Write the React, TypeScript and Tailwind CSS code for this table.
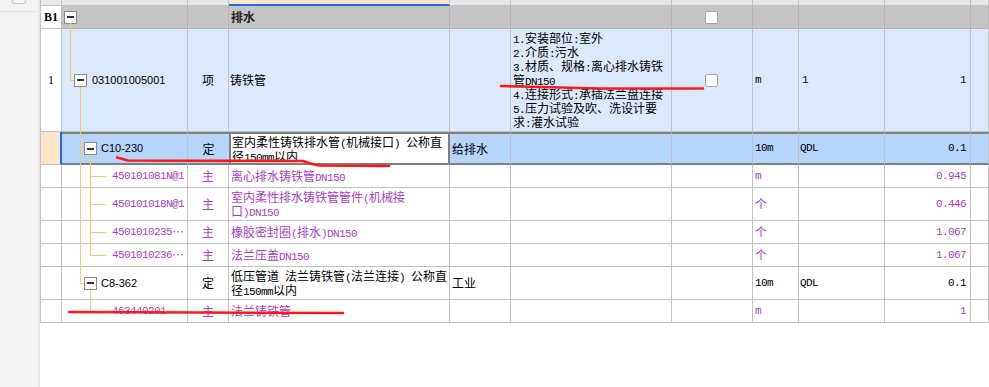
// Quota grid: 排水 section with 定额 / 主材 tree rows
import React from 'react';

const W = ['w-[21px]', 'w-[126px]', 'w-[41px]', 'w-[221px]', 'w-[61px]', 'w-[161px]', 'w-[81px]', 'w-[46px]', 'w-[86px]', 'w-[86px]', 'flex-1'];
const GRID = 'border-r border-b border-[#c2c2c2]';
const SEL = 'border-r border-y-2 border-r-[#c2c2c2] border-y-[#7f7f7f]';
const PURPLE = 'text-[#a842c2]';

// ASCII runs get the narrow half-width look, CJK stays 12px
function Sim({ text }: { text: string }) {
  const parts = text.match(/[ -~]+|[^ -~]+/g) ?? [];
  return (
    <>
      {parts.map((p, i) =>
        /^[ -~]/.test(p) ? (
          <span key={i} className="font-['Liberation_Mono',monospace] text-[11px] tracking-[-0.6px]">
            {p}
          </span>
        ) : (
          <span key={i}>{p}</span>
        )
      )}
    </>
  );
}

function Cell({ i, b = GRID, className = '', children }: { i: number; b?: string; className?: string; children?: React.ReactNode }) {
  return <div className={`${W[i]} shrink-0 flex items-center overflow-hidden ${b} ${className}`}>{children}</div>;
}

function Box() {
  return (
    <span className="w-[13px] h-[13px] shrink-0 border border-[#8c8c8c] bg-white flex items-center justify-center">
      <span className="w-[7px] h-[2px] bg-[#333]" />
    </span>
  );
}

function Check() {
  return <span className="w-[13px] h-[13px] border border-[#a6a6a6] rounded-[2px] bg-white" />;
}

function Lines({ lines }: { lines: string[] }) {
  return (
    <div className="flex flex-col">
      {lines.map((l) => (
        <div key={l} className="h-[14px] leading-[14px] whitespace-nowrap">
          <Sim text={l} />
        </div>
      ))}
    </div>
  );
}

const SUBS = [
  { code: '450101081N@1', name: ['离心排水铸铁管DN150'], unit: 'm', qty: '0.945', h: 'h-[23px]' },
  { code: '450101018N@1', name: ['室内柔性排水铸铁管管件(机械接', '口)DN150'], unit: '个', qty: '0.446', h: 'h-[33px]' },
  { code: '4501010235…', name: ['橡胶密封圈(排水)DN150'], unit: '个', qty: '1.067', h: 'h-[23px]' },
  { code: '4501010236…', name: ['法兰压盖DN150'], unit: '个', qty: '1.067', h: 'h-[23px]' },
];

const DESC = ['1.安装部位:室外', '2.介质:污水', '3.材质、规格:离心排水铸铁', '管DN150', '4.连接形式:承插法兰盘连接', '5.压力试验及吹、洗设计要', '求:灌水试验'];

function SubRow({ code, name, unit, qty, h }: { code: string; name: string[]; unit: string; qty: string; h: string }) {
  return (
    <div className={`flex ${h} bg-white border-l border-[#c2c2c2] ${PURPLE}`}>
      <Cell i={0} />
      <Cell i={1} className="pl-[50px]">
        <Sim text={code} />
      </Cell>
      <Cell i={2} className="justify-center">主</Cell>
      <Cell i={3} className="pl-[2px]">
        <Lines lines={name} />
      </Cell>
      <Cell i={4} />
      <Cell i={5} />
      <Cell i={6} />
      <Cell i={7} className="pl-[2px]">
        <Sim text={unit} />
      </Cell>
      <Cell i={8} />
      <Cell i={9} className="justify-end pr-[4px]">
        <Sim text={qty} />
      </Cell>
      <Cell i={10} />
    </div>
  );
}

export default function App() {
  return (
    <div className="relative w-[989px] h-[387px] flex bg-white overflow-hidden font-['Noto_Sans_CJK_SC',sans-serif] text-[12px] text-black">
      {/* left dock */}
      <div className="w-[40px] shrink-0 bg-[#f3f3f3] border-r-2 border-[#e8e8e8] flex flex-col">
        <div className="ml-[12px] w-[14px] h-[4px] border border-t-0 border-[#c6c6c6] rounded-b-[3px] bg-[#f8f8f8]" />
        <div className="mt-[7px] mr-[2px] h-px bg-[#e0e0e0]" />
      </div>

      <div className="flex-1 flex flex-col">
        {/* column header strip */}
        <div className="flex h-[6px] bg-[#e8e8e8] border-l border-[#c2c2c2]">
          {W.map((w, i) =>
            i === 3 ? (
              <div key={i} className={`${w} shrink-0 bg-[#fde6c6] border-b-2 border-[#1a6df5] border-r border-r-[#c2c2c2]`} />
            ) : (
              <div key={i} className={`${w} shrink-0 ${GRID}`} />
            )
          )}
        </div>

        {/* B1 */}
        <div className="flex h-[23px] bg-[#c4c4c4] border-l border-[#c2c2c2]">
          <Cell i={0} className="bg-white justify-center font-['Liberation_Serif',serif] font-bold">B1</Cell>
          <Cell i={1} b="border-r border-b border-[#b6b6b6]" className="pl-[2px]">
            <Box />
          </Cell>
          <Cell i={2} b="border-r border-b border-[#b6b6b6]" />
          <Cell i={3} b="border-r border-b border-[#b6b6b6]" className="pl-[2px] font-bold text-[#222]">排水</Cell>
          <Cell i={4} b="border-r border-b border-[#b6b6b6]" />
          <Cell i={5} b="border-r border-b border-[#b6b6b6]" />
          <Cell i={6} b="border-r border-b border-[#b6b6b6]" className="pl-[33px]">
            <Check />
          </Cell>
          <Cell i={7} b="border-r border-b border-[#b6b6b6]" />
          <Cell i={8} b="border-r border-b border-[#b6b6b6]" />
          <Cell i={9} b="border-r border-b border-[#b6b6b6]" />
          <Cell i={10} b="border-r border-b border-[#b6b6b6]" />
        </div>

        {/* 清单 row 1 */}
        <div className="flex h-[103px] bg-[#dce9fc] border-l border-[#c2c2c2]">
          <Cell i={0} className="bg-white justify-center font-['Liberation_Serif',serif]">1</Cell>
          <Cell i={1} className="pl-[12px] gap-[5px]">
            <Box />
            <span className="font-['Liberation_Sans',sans-serif] text-[11px]">031001005001</span>
          </Cell>
          <Cell i={2} className="justify-center">项</Cell>
          <Cell i={3} className="pl-[1px]">铸铁管</Cell>
          <Cell i={4} />
          <Cell i={5} className="pl-[2px]">
            <Lines lines={DESC} />
          </Cell>
          <Cell i={6} className="pl-[33px]">
            <Check />
          </Cell>
          <Cell i={7} className="pl-[2px]">
            <Sim text="m" />
          </Cell>
          <Cell i={8} className="pl-[3px]">
            <Sim text="1" />
          </Cell>
          <Cell i={9} className="justify-end pr-[4px]">
            <Sim text="1" />
          </Cell>
          <Cell i={10} />
        </div>

        {/* selected 定额 row */}
        <div className="flex h-[33px] bg-[#b5d5fc] border-l border-[#c2c2c2]">
          <Cell i={0} b="border-r-2 border-b border-r-[#1a6df5] border-b-[#c2c2c2]" className="bg-[#fde6c8]" />
          <Cell i={1} b={SEL} className="pl-[22px] gap-[4px]">
            <Box />
            <span className="font-['Liberation_Sans',sans-serif] text-[11px]">C10-230</span>
          </Cell>
          <Cell i={2} b="border-y-2 border-y-[#7f7f7f]" className="justify-center">定</Cell>
          <Cell i={3} b="border-2 border-[#7f7f7f]" className="bg-white pl-[1px]">
            <Lines lines={['室内柔性铸铁排水管(机械接口) 公称直', '径150mm以内']} />
          </Cell>
          <Cell i={4} b={SEL} className="pl-[2px]">给排水</Cell>
          <Cell i={5} b={SEL} />
          <Cell i={6} b={SEL} />
          <Cell i={7} b={SEL} className="pl-[2px]">
            <Sim text="10m" />
          </Cell>
          <Cell i={8} b={SEL} className="pl-[1px]">
            <Sim text="QDL" />
          </Cell>
          <Cell i={9} b={SEL} className="justify-end pr-[4px]">
            <Sim text="0.1" />
          </Cell>
          <Cell i={10} b={SEL} />
        </div>

        {SUBS.map((s) => (
          <SubRow key={s.code} {...s} />
        ))}

        {/* C8-362 */}
        <div className="flex h-[33px] bg-white border-l border-[#c2c2c2]">
          <Cell i={0} />
          <Cell i={1} className="pl-[22px] gap-[4px]">
            <Box />
            <span className="font-['Liberation_Sans',sans-serif] text-[11px]">C8-362</span>
          </Cell>
          <Cell i={2} className="justify-center">定</Cell>
          <Cell i={3} className="pl-[2px]">
            <Lines lines={['低压管道 法兰铸铁管(法兰连接) 公称直', '径150mm以内']} />
          </Cell>
          <Cell i={4} className="pl-[2px]">工业</Cell>
          <Cell i={5} />
          <Cell i={6} />
          <Cell i={7} className="pl-[2px]">
            <Sim text="10m" />
          </Cell>
          <Cell i={8} className="pl-[1px]">
            <Sim text="QDL" />
          </Cell>
          <Cell i={9} className="justify-end pr-[4px]">
            <Sim text="0.1" />
          </Cell>
          <Cell i={10} />
        </div>

        <SubRow code="463440201" name={['法兰铸铁管']} unit="m" qty="1" h="h-[23px]" />
      </div>

      {/* tree connectors + red pen marks */}
      <svg className="absolute left-0 top-0 pointer-events-none" width="989" height="387">
        <g stroke="#ffc46e" strokeWidth="1" fill="none">
          <path d="M70.5 23V80.5H74" />
          <path d="M80.5 87V283.5H84M80.5 148.5H84" />
          <path d="M90.5 155V255.5H106M90.5 176.5H106M90.5 204.5H106M90.5 232.5H106" />
          <path d="M90.5 290V311.5H106" />
        </g>
        <g stroke="#ff1a1a" strokeWidth="2.6" fill="none" strokeLinecap="round" strokeLinejoin="round">
          <polyline points="501,86 540,87 600,88.5 703,88.5" />
          <polyline points="117,157.5 128,160.5 303,161 312,164 320,165.5 389,166" />
          <polyline points="69,312 200,312.5 343,313" />
        </g>
      </svg>
    </div>
  );
}
